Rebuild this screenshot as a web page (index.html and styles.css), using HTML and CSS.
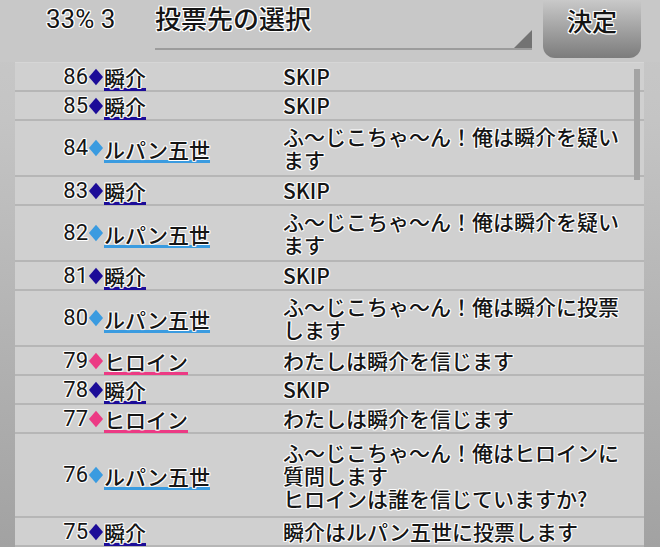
FILE: index.html
```html
<!DOCTYPE html>
<html lang="ja">
<head>
<meta charset="utf-8">
<link rel="stylesheet" href="styles.css">
</head>
<body>
<div class="screen">
  <header class="header">
    <div class="stat">33% 3</div>
    <div class="select">
      <span class="select-label">投票先の選択</span>
      <span class="select-arrow"></span>
    </div>
    <div class="decide">決定</div>
  </header>
  <div class="list">
    <div class="scrollbar"></div>
    <div class="row r1"><div class="who"><span class="num">86</span><span class="dia c-s"></span><span class="name c-s">瞬介</span></div><div class="msg">SKIP</div></div>
    <div class="row r1"><div class="who"><span class="num">85</span><span class="dia c-s"></span><span class="name c-s">瞬介</span></div><div class="msg">SKIP</div></div>
    <div class="row r2"><div class="who"><span class="num">84</span><span class="dia c-l"></span><span class="name c-l">ルパン五世</span></div><div class="msg">ふ～じこちゃ～ん！俺は瞬介を疑います</div></div>
    <div class="row r1"><div class="who"><span class="num">83</span><span class="dia c-s"></span><span class="name c-s">瞬介</span></div><div class="msg">SKIP</div></div>
    <div class="row r2"><div class="who"><span class="num">82</span><span class="dia c-l"></span><span class="name c-l">ルパン五世</span></div><div class="msg">ふ～じこちゃ～ん！俺は瞬介を疑います</div></div>
    <div class="row r1"><div class="who"><span class="num">81</span><span class="dia c-s"></span><span class="name c-s">瞬介</span></div><div class="msg">SKIP</div></div>
    <div class="row r2"><div class="who"><span class="num">80</span><span class="dia c-l"></span><span class="name c-l">ルパン五世</span></div><div class="msg">ふ～じこちゃ～ん！俺は瞬介に投票します</div></div>
    <div class="row r1"><div class="who"><span class="num">79</span><span class="dia c-h"></span><span class="name c-h">ヒロイン</span></div><div class="msg">わたしは瞬介を信じます</div></div>
    <div class="row r1"><div class="who"><span class="num">78</span><span class="dia c-s"></span><span class="name c-s">瞬介</span></div><div class="msg">SKIP</div></div>
    <div class="row r1"><div class="who"><span class="num">77</span><span class="dia c-h"></span><span class="name c-h">ヒロイン</span></div><div class="msg">わたしは瞬介を信じます</div></div>
    <div class="row r3"><div class="who"><span class="num">76</span><span class="dia c-l"></span><span class="name c-l">ルパン五世</span></div><div class="msg">ふ～じこちゃ～ん！俺はヒロインに質問します<br>ヒロインは誰を信じていますか?</div></div>
    <div class="row r1"><div class="who"><span class="num">75</span><span class="dia c-s"></span><span class="name c-s">瞬介</span></div><div class="msg">瞬介はルパン五世に投票します</div></div>
  </div>
</div>
</body>
</html>
```

FILE: styles.css
```css
html, body {
  margin: 0;
  padding: 0;
}
body {
  width: 660px;
  height: 547px;
  overflow: hidden;
  font-family: "Noto Sans CJK JP", "Noto Sans", sans-serif;
  font-weight: 500;
  color: #151515;
}
.screen {
  width: 660px;
  height: 547px;
  background: linear-gradient(to bottom, #c9c9c9 0px, #c4c4c4 120px, #a2a2a2 547px);
  overflow: hidden;
}
.header {
  height: 62px;
  display: flex;
  align-items: flex-start;
  background: #c8c8c8;
  text-shadow: -1px 0 0 #fff, 1px 0 0 #fff, 0 -1px 0 #fff, 0 1px 0 #fff, 1px 1px 0 #fff, -1px -1px 0 #fff, 1px -1px 0 #fff, -1px 1px 0 #fff;
}
.stat {
  margin-left: 46px;
  margin-top: 4px;
  font-size: 26px;
  line-height: 30px;
  width: 109px;
  font-family: "Roboto", "Noto Sans", sans-serif;
  font-weight: 400;
}
.select {
  width: 377px;
  height: 48px;
  border-bottom: 2px solid #9c9c9c;
  position: relative;
}
.select-label {
  display: block;
  font-size: 26px;
  line-height: 32px;
  margin-top: 2px;
}
.select-arrow {
  position: absolute;
  right: 0;
  bottom: 0;
  width: 0;
  height: 0;
  border-left: 18px solid transparent;
  border-bottom: 18px solid #737373;
}
.decide {
  margin-left: 11px;
  width: 98px;
  height: 58px;
  border-radius: 0 0 12px 12px;
  background: linear-gradient(to bottom, #c9c9c9 0%, #a6a6a6 45%, #7c7c7c 100%);
  text-align: center;
  font-size: 25px;
  line-height: 40px;
}
.list {
  position: relative;
  margin-left: 15px;
  width: 629px;
  background: #d0d0d0;
  border-top: 1px solid #d6d6d6;
  text-shadow: -1px 0 0 #fff, 1px 0 0 #fff, 0 -1px 0 #fff, 0 1px 0 #fff, 1px 1px 0 #f4f4f4, -1px -1px 0 #f4f4f4, 1px -1px 0 #f4f4f4, -1px 1px 0 #f4f4f4;
}
.scrollbar {
  position: absolute;
  left: 619px;
  top: 6px;
  width: 6px;
  height: 111px;
  background: #a4a4a4;
}
.row {
  display: flex;
  align-items: center;
  border-bottom: 2px solid #b6b6b6;
  box-sizing: border-box;
}
.r1 { height: 29px; }
.r2 { height: 56px; }
.r3 { height: 84px; }
.who {
  width: 268px;
  display: flex;
  align-items: center;
  flex: none;
}
.num {
  width: 73px;
  text-align: right;
  font-size: 22px;
  line-height: 24px;
  font-family: "Roboto", "Noto Sans", sans-serif;
  font-weight: 400;
}
.dia {
  width: 10px;
  height: 10px;
  margin: 0 3px 0 3px;
  transform: scaleY(1.15) rotate(45deg);
}
.name {
  font-size: 21px;
  line-height: 22px;
  padding-top: 2px;
  border-bottom: 3px solid;
  margin-top: 2px;
}
.dia.c-s { background: #1c0c98; }
.dia.c-l { background: #3a9be0; }
.dia.c-h { background: #ec3a84; }
.name.c-s { border-color: #1c0c98; }
.name.c-l { border-color: #3a9be0; }
.name.c-h { border-color: #ec3a84; }
.msg {
  width: 345px;
  font-size: 21px;
  line-height: 23px;
}
```
